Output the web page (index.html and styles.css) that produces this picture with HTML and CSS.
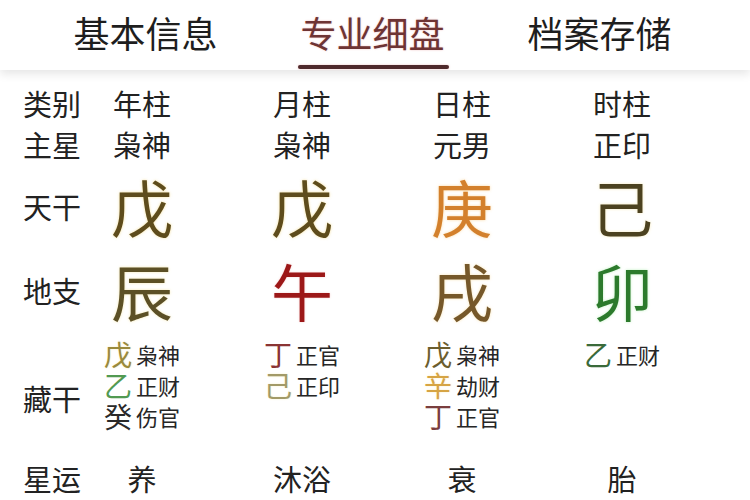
FILE: index.html
```html
<!DOCTYPE html>
<html lang="zh">
<head>
<meta charset="utf-8">
<link rel="stylesheet" href="styles.css">
</head>
<body>
<div class="page">
  <header class="tabs">
    <div class="tab">基本信息</div>
    <div class="tab active">专业细盘</div>
    <div class="tab">档案存储</div>
  </header>
  <main class="table">
    <div class="row r-head">
      <div class="lbl">类别</div>
      <div class="cell">年柱</div>
      <div class="cell">月柱</div>
      <div class="cell">日柱</div>
      <div class="cell">时柱</div>
    </div>
    <div class="row r-head">
      <div class="lbl">主星</div>
      <div class="cell">枭神</div>
      <div class="cell">枭神</div>
      <div class="cell">元男</div>
      <div class="cell">正印</div>
    </div>
    <div class="row r-big">
      <div class="lbl">天干</div>
      <div class="cell big c-wu">戊</div>
      <div class="cell big c-wu">戊</div>
      <div class="cell big c-geng">庚</div>
      <div class="cell big c-ji">己</div>
    </div>
    <div class="row r-big">
      <div class="lbl">地支</div>
      <div class="cell big c-chen">辰</div>
      <div class="cell big c-wu2">午</div>
      <div class="cell big c-xu">戌</div>
      <div class="cell big c-mao">卯</div>
    </div>
    <div class="row r-hidden">
      <div class="lbl lbl-hidden">藏干</div>
      <div class="cell">
        <div class="stack">
          <div class="hl"><span class="stem h-wu1">戊</span><span class="god">枭神</span></div>
          <div class="hl"><span class="stem h-yi1">乙</span><span class="god">正财</span></div>
          <div class="hl"><span class="stem h-gui">癸</span><span class="god">伤官</span></div>
        </div>
      </div>
      <div class="cell">
        <div class="stack">
          <div class="hl"><span class="stem h-ding2">丁</span><span class="god">正官</span></div>
          <div class="hl"><span class="stem h-ji2">己</span><span class="god">正印</span></div>
        </div>
      </div>
      <div class="cell">
        <div class="stack">
          <div class="hl"><span class="stem h-wu3">戊</span><span class="god">枭神</span></div>
          <div class="hl"><span class="stem h-xin">辛</span><span class="god">劫财</span></div>
          <div class="hl"><span class="stem h-ding3">丁</span><span class="god">正官</span></div>
        </div>
      </div>
      <div class="cell">
        <div class="stack">
          <div class="hl"><span class="stem h-yi4">乙</span><span class="god">正财</span></div>
        </div>
      </div>
    </div>
    <div class="row r-foot">
      <div class="lbl">星运</div>
      <div class="cell">养</div>
      <div class="cell">沐浴</div>
      <div class="cell">衰</div>
      <div class="cell">胎</div>
    </div>
  </main>
</div>
</body>
</html>
```

FILE: styles.css
```css
html, body {
  margin: 0;
  padding: 0;
  background: #ffffff;
}
body {
  width: 750px;
  height: 500px;
  overflow: hidden;
  font-family: "Noto Sans CJK SC", "Noto Sans", sans-serif;
  color: #222222;
}
.page {
  width: 750px;
  height: 500px;
}
.tabs {
  height: 70px;
  display: flex;
  justify-content: center;
  gap: 82px;
  background: #ffffff;
  box-shadow: 0 4px 9px rgba(0, 0, 0, 0.1);
  position: relative;
  border-left: 1px solid #e8e8e8;
  margin-left: 5px;
  padding-right: 5px;
  margin-left: 0;
  border-left: 0;
}
.tab {
  font-size: 36px;
  line-height: 36px;
  padding-top: 14px;
  color: #1e1e1e;
  position: relative;
  text-align: center;
  width: 145px;
}
.tab.active {
  color: #6e3434;
  text-shadow: 0 0 2px rgba(230, 150, 150, 0.6);
}
.tab.active::after {
  content: "";
  position: absolute;
  left: -2px;
  right: -4px;
  top: 65px;
  height: 4px;
  border-radius: 2px;
  background: #4e2a2c;
  box-shadow: 0 0 2px rgba(220, 120, 120, 0.5);
}
.table {
  padding-top: 12px;
}
.row {
  display: grid;
  grid-template-columns: 82px repeat(4, 160px);
  align-items: center;
}
.lbl {
  padding-left: 23px;
  font-size: 29px;
  white-space: nowrap;
  color: #222;
}
.cell {
  padding-right: 40px;
  text-align: center;
  white-space: nowrap;
  font-size: 29px;
}
.r-head {
  height: 41px;
}
.r-big {
  height: 84px;
}
.big {
  font-size: 62px;
  line-height: 62px;
}
.c-wu { color: #5e4c1c; text-shadow: 0 0 3px rgba(240, 210, 110, 0.7); }
.c-geng { color: #d3802c; text-shadow: 0 0 3px rgba(250, 200, 120, 0.7); }
.c-ji { color: #4c4220; text-shadow: 0 0 3px rgba(240, 220, 140, 0.6); }
.c-chen { color: #5c5026; text-shadow: 0 0 3px rgba(240, 220, 130, 0.6); }
.c-wu2 { color: #9c1818; text-shadow: 0 0 2px rgba(240, 150, 150, 0.5); }
.c-xu { color: #76582a; text-shadow: 0 0 3px rgba(245, 210, 130, 0.6); }
.c-mao { color: #2c7a2c; text-shadow: 0 0 3px rgba(150, 230, 150, 0.6); }

.r-hidden {
  padding-top: 7px;
  height: 93px;
  align-items: start;
}
.r-hidden .cell {
  display: flex;
  justify-content: center;
}
.lbl-hidden {
  align-self: start;
  padding-top: 44px;
  line-height: 30px;
}
.stack {
  display: flex;
  flex-direction: column;
  align-items: flex-start;
}
.hl {
  display: flex;
  align-items: center;
  height: 31px;
  gap: 4px;
}
.stem {
  font-size: 28px;
  line-height: 31px;
}
.god {
  font-size: 22px;
  line-height: 31px;
  color: #262626;
}
.h-wu1 { color: #9a8a3c; text-shadow: 0 0 2px rgba(240, 220, 140, 0.6); }
.h-yi1 { color: #529a52; }
.h-gui { color: #2a2a2a; }
.h-ding2 { color: #8a3434; }
.h-ji2 { color: #a29a68; text-shadow: 0 0 2px rgba(240, 230, 160, 0.6); }
.h-wu3 { color: #6c5e2e; }
.h-xin { color: #d6a444; text-shadow: 0 0 2px rgba(250, 220, 140, 0.6); }
.h-ding3 { color: #7a3e3e; }
.h-yi4 { color: #3a6a3a; }

.r-foot {
  padding-top: 31px;
}
.r-foot .lbl, .r-foot .cell {
  line-height: 30px;
}
```
